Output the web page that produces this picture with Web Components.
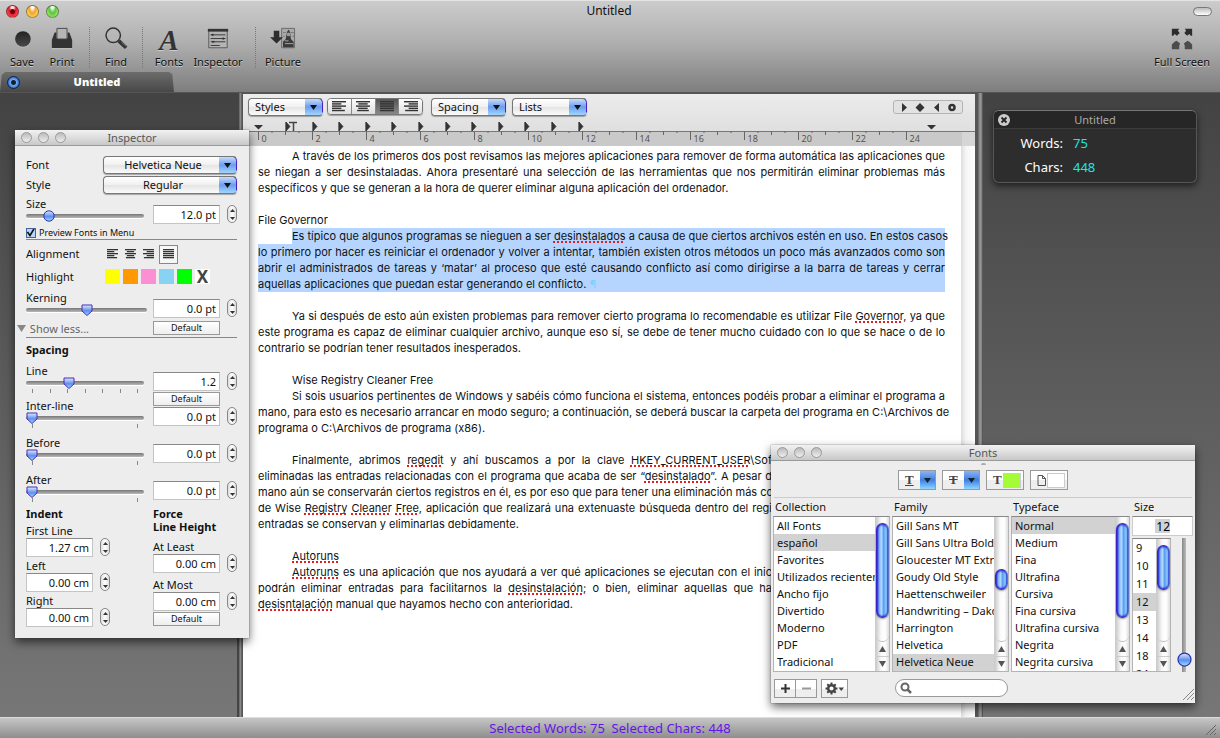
<!DOCTYPE html>
<html lang="en">
<head>
<meta charset="utf-8">
<title>Untitled</title>
<style>
html, body { height: 100%; margin: 0; }
body { font: 11px/14px "Noto Sans", sans-serif; color: #111; overflow: hidden; }
</style>
</head>
<body>
<writer-window></writer-window>

<script>
const define = (name, html, setup) => {
  const template = document.createElement('template');
  customElements.define(name, class extends HTMLElement {
    connectedCallback() {
      if (this.shadowRoot) return;
      const root = this.attachShadow({ mode: 'open' });
      template.innerHTML = typeof html === 'function' ? html(this) : html;
      root.append(template.content.cloneNode(true));
      if (setup) setup(this, root);
    }
  });
};
const svgUrl = s => `url('data:image/svg+xml,${encodeURIComponent(s)}')`;

const bars = (kind) => {
  const rows = { left: [[0,12],[0,8],[0,12],[0,8],[0,11]], center: [[0,12],[2,8],[0,12],[2,8],[1,10]],
    full: [[0,12],[0,12],[0,12],[0,12],[0,12]], right: [[0,12],[4,8],[0,12],[4,8],[1,11]] }[kind];
  return rows.map(([x, w], i) => `<rect x="${x}" y="${i * 2}" width="${w}" height="1.3"/>`).join('');
};
const alignIcon = (kind, w = 14, h = 11) => `<svg width="${w}" height="${h}" viewBox="0 0 12 10" preserveAspectRatio="none" fill="#333">${bars(kind)}</svg>`;

const icons = {
  save: '<defs><linearGradient id="g" x2="0" y2="1"><stop stop-color="#222"/><stop offset="1" stop-color="#4a4a4a"/></linearGradient></defs><circle cx="15" cy="14" r="8.500" fill="#ccc" opacity=".6"/><circle cx="15" cy="13" r="8.500" fill="url(#g)"/>',
  print: '<path d="M7 6h-1L3 14v8q0 1 1 1h20q1 0 1-1v-8L22 6h-2v6H8V6z" fill="#333"/><path d="M8.500 1.500h11V13h-11z" fill="#b5b5b5" stroke="#444"/><path d="M3 23.500h22" stroke="#ccc"/>',
  find: '<circle cx="11" cy="9" r="7.800" fill="#bbb" fill-opacity=".4" stroke="#333" stroke-width="1.600"/><path d="M17 15l8 7.500" stroke="#333" stroke-width="4"/><path d="M20 16.500l5 4.500" stroke="#777" stroke-width="1"/>',
  inspector: '<path d="M4 3.500h20v19H4z" fill="#b4b4b4" stroke="#555"/><path d="M3 2h22v3H3z" fill="#333"/><path d="M6 8.500h16M6 12.500h16M6 16h16M6 20h10" stroke="#333"/><path d="M9 7v3l-3-1.500zM19 11v3l3-1.500zM8 14.500v3l3-1.500z" fill="#333"/>',
  picture: '<path d="M12.500 1.500h14v21h-14z" fill="#aaa" stroke="#666"/><path d="M14 6h3M22 6h4M14 10h2M24 10h2" stroke="#777"/><path d="M17 13q1-9 3-10q2 1 2.500 10l3 3v6H14v-6z" fill="#3a3a3a"/><circle cx="20" cy="8" r="2" fill="#999"/><path d="M16 18h9M16 15h4" stroke="#aaa"/><path d="M4 4h6v7h4l-7 7-7-7h4z" fill="#2d2d2d"/>',
  full: '<g fill="#2c2c2c"><path d="M3 2h8L9.500 4 11.500 6.500 8.500 9.500 6 7.500 4.500 9.500H3z"/><path d="M25 2h-8l1.500 2L16.500 6.500 19.500 9.500 22 7.500l1.500 2H25z"/></g><g fill="#4c4c4c"><path d="M3 24h8v-4l1-2-4-3-2 1-3 3z"/><path d="M25 24h-8v-4l-1-2 4-3 2 1 3 3z"/></g>'
};

define('tool-button', el => `<style>
  :host { display: block; width: var(--tool-width, 40px); }
  button { all: unset; box-sizing: border-box; width: 100%; display: flex; flex-direction: column; align-items: center; gap: 4px; white-space: nowrap; text-shadow: 0 1px 0 #ccc; }
  svg { display: block; width: 26px; height: 24px; }
  .a { height: 24px; font: italic bold 29px/26px "Liberation Serif", serif; color: #333; }
</style><button type="button">${el.getAttribute('icon') === 'fonts' ? '<span class="a" aria-hidden="true">A</span>' : `<svg viewBox="0 0 28 26" aria-hidden="true">${icons[el.getAttribute('icon')]}</svg>`}<span><slot></slot></span></button>`);

define('traffic-lights', el => `<style>
  :host { display: flex; gap: var(--light-gap, 7px); align-items: center; }
  button { all: unset; box-sizing: border-box; width: var(--light, 13px); height: var(--light, 13px); border-radius: 50%; border: 1px solid rgba(60,20,10,.5); }
  .close { background: radial-gradient(circle at 50% 50%, #700 0 2px, transparent 3px), radial-gradient(ellipse at 50% 10%, #fdd 0 15%, #e01830 45%, #f66 100%); }
  .min { background: radial-gradient(ellipse at 50% 0%, #fff 0 15%, #f4a030 45%, #ff6 100%); }
  .zoom { background: radial-gradient(ellipse at 50% 0%, #efe 0 15%, #5cc43e 45%, #bf8 100%); }
  :host([muted]) button { background: linear-gradient(#bbb, #eee); border-color: #999; }
</style><button type="button" class="close" aria-label="Close"></button><button type="button" class="min" aria-label="Minimize"></button><button type="button" class="zoom" aria-label="Zoom"></button>`);

define('window-header', `<style>
  :host { display: block; background: linear-gradient(#ccc, #b0b0b0 45%, #7e7e7e); border-bottom: 1px solid #555; border-top: 1px solid #e4e4e4; box-sizing: border-box; height: 93px; }
  .title { display: grid; grid-template-columns: 1fr auto 1fr; align-items: center; height: 20px; padding: 0 8px 0 6px; font-size: 12px; }
  .pill { all: unset; justify-self: end; width: 17px; height: 7px; border: 1px solid #777; border-radius: 5px; background: linear-gradient(#bbb, #fff); }
  .tools { display: flex; height: 51px; padding: 6px 18px 0 2px; box-sizing: border-box; }
  .sep { width: 0; border-left: 1px dotted #777; margin: 0 7px; height: 41px; }
  .push { margin-left: auto; }
  .tab { display: flex; align-items: center; width: 174px; height: 20px; background: linear-gradient(#6c6c6c, #484848); clip-path: polygon(3% 0, 97% 0, 99% 10%, 100% 100%, 0 100%, 1% 15%); color: #fff; font-weight: 700; }
  .tab b { flex: 1; text-align: center; }
  .tab button { all: unset; width: 11px; height: 11px; margin-left: 7px; border-radius: 50%; border: 1px solid #124; background: radial-gradient(circle, #123 0 2px, #7ae 3px, #26c 6px); }
</style>
<div class="title"><traffic-lights></traffic-lights><span>Untitled</span><button class="pill" type="button" aria-label="Toggle toolbar"></button></div>
<div class="tools">
  <tool-button icon="save">Save</tool-button><tool-button icon="print">Print</tool-button><span class="sep"></span>
  <tool-button icon="find" style="--tool-width:38px">Find</tool-button><span class="sep"></span>
  <tool-button icon="fonts" style="--tool-width:38px">Fonts</tool-button><tool-button icon="inspector" style="--tool-width:60px">Inspector</tool-button><span class="sep"></span>
  <tool-button icon="picture">Picture</tool-button><tool-button class="push" icon="full">Full Screen</tool-button>
</div>
<div class="tab"><button type="button" aria-label="Close tab"></button><b>Untitled</b></div>`);

const popArrow = svgUrl('<svg xmlns="http://www.w3.org/2000/svg" width="18" height="18" viewBox="0 0 18 18" preserveAspectRatio="none"><defs><linearGradient id="g" x2="0" y2="1"><stop stop-color="#d4e2fb"/><stop offset=".5" stop-color="#6a9ef0"/><stop offset="1" stop-color="#a8dcff"/></linearGradient></defs><path d="M0 0h14q4 0 4 4v10q0 4-4 4H0z" fill="url(#g)"/><path d="M0 .5h14q3.500 0 3.500 4v10" fill="none" stroke="#4a20c0"/><path d="M5 7h7l-3.500 5z" fill="#111"/></svg>');
define('pull-down', el => `<style>
  :host { display: block; }
  select { appearance: none; box-sizing: border-box; display: block; width: 100%; height: 18px; margin: 0; padding: 0 18px 0 6px; font: inherit; color: inherit;
    border: 1px solid #777; border-right-color: transparent; border-radius: 4px; background: ${popArrow} right 0 top 0 / 18px 18px no-repeat border-box, linear-gradient(#fff, #f0f0f0 50%, #e4e4e4 51%, #fbfbfb); box-shadow: 0 1px 1px rgba(0,0,0,.3); }
  :host([centered]) select { text-align-last: center; padding-left: 4px; }
</style><select aria-label="${el.getAttribute('label')}"><option>${el.getAttribute('value')}</option></select>`);

define('ruler-strip', () => {
  let marks = '';
  for (let q = 0; q <= 48; q++) {
    const x = 15.5 + q * 13.5, cm = q / 2, major = q % 4 === 0;
    marks += `<path d="M${x} 12v${major ? 9 : q % 2 ? 2 : 4}" stroke="#666"/>`;
    if (major) marks += `<text x="${x + 3}" y="23">${cm}</text>`;
  }
  for (let i = 0; i < 12; i++) marks += `<path d="M${43 + Math.round(i * 26.6)} 3v9M${43 + Math.round(i * 26.6)} 3l4 4.500-4 4.500z" fill="#333" stroke="#333" stroke-width=".8"/>`;
  return `<style>
  :host { display: block; height: 27px; background: linear-gradient(transparent 12px, #777 12px 13px, #c9c9c9 13px); overflow: hidden; }
  svg { display: block; }
  text { font: 9px "Noto Sans", sans-serif; fill: #555; }
</style><svg width="732" height="27" aria-label="Ruler">${marks}
<path d="M719 13h14v15h-14z" fill="#d6d6d6"/>
<path d="M11 6h9l-4.500 4.500zM684 6h9l-4.500 4.500z" fill="#333"/><path d="M46 3.500h8M50.500 3v9" stroke="#444" stroke-width="1.500"/></svg>`;
});

define('format-bar', `<style>
  :host { display: block; background: linear-gradient(#ececec, #dadada); }
  .row { display: flex; align-items: center; height: 25px; padding: 0 12px 0 5px; gap: 8px; box-sizing: border-box; }
  pull-down { width: 75px; }
  .lists { margin-left: -2px; }
  .seg { display: flex; width: 94px; margin: 0 0 0 -4px; border: 1px solid #777; border-radius: 4px; overflow: hidden; box-shadow: 0 1px 1px rgba(0,0,0,.3); }
  .seg button { all: unset; flex: 1; height: 15px; display: grid; place-items: center; background: linear-gradient(#fdfdfd, #dedede); border-left: 1px solid #888; }
  .seg button:first-child { border: 0; }
  .seg .on { background: linear-gradient(#555, #888); }
  .tabs { all: unset; margin-left: auto; height: 12px; border: 1px solid #b4b4b4; border-radius: 3px; background: #e2e2e2; }
  svg { display: block; }
</style>
<div class="row"><pull-down label="Styles" value="Styles"></pull-down>
<div class="seg" role="group" aria-label="Alignment"><button type="button" aria-label="Left">${alignIcon('left')}</button><button type="button" aria-label="Center">${alignIcon('center')}</button><button type="button" class="on" aria-label="Justify">${alignIcon('full')}</button><button type="button" aria-label="Right">${alignIcon('right')}</button></div>
<pull-down label="Spacing" value="Spacing"></pull-down><pull-down class="lists" label="Lists" value="Lists"></pull-down>
<button type="button" class="tabs" aria-label="Tab stops"><svg width="68" height="13" fill="#333"><path d="M8 2l5 4.500-5 4.500zM26 2l4.500 4.500-4.500 4.500-4.500-4.500zM45 2v9l-5-4.500z"/><circle cx="58" cy="6.500" r="2.500" fill="none" stroke="#333" stroke-width="2.500"/></svg></button></div>
<ruler-strip></ruler-strip>`);

const L = (s, c = '') => `<span class="j ${c}">${s}</span>`;
define('document-page', `<style>
  :host { display: block; flex: 1; min-height: 0; overflow: hidden; background: linear-gradient(90deg, #fff 0 calc(100% - 14px), #ddd calc(100% - 14px), #f6f6f6 calc(100% - 9px), #fff); }
  article { padding: 2px 30px 0 15px; font: 11px/16px Inter, "Liberation Sans", sans-serif; color: #111; }
  p { margin: 0 0 16px; }
  p.tight { margin: 0; }
  span.j { display: block; white-space: nowrap; text-align-last: justify; }
  .j.in, .l.in { margin-left: 34px; }
  .j.under { margin-right: 173px; }
  .l { display: block; white-space: nowrap; }
  u { text-decoration: underline dotted #e02020 2px; text-underline-offset: 1px; text-decoration-skip-ink: none; }
  .sel .j, .sel .l { background: #b5d5ff; }
  i { font-style: normal; color: #7fd0ff; }
</style>
<article>
<p>${L('A través de los primeros dos post revisamos las mejores aplicaciones para remover de forma automática las aplicaciones que', 'in')}
${L('se niegan a ser desinstaladas. Ahora presentaré una selección de las herramientas que nos permitirán eliminar problemas más')}
<span class="l">específicos y que se generan a la hora de querer eliminar alguna aplicación del ordenador.</span></p>
<p class="tight">File Governor</p>
<p class="sel">${L('Es típico que algunos programas se nieguen a ser <u>desinstalados</u> a causa de que ciertos archivos estén en uso. En estos casos', 'in')}
${L('lo primero por hacer es reiniciar el ordenador y volver a intentar, también existen otros métodos un poco más avanzados como son')}
${L('abrir el administrados de tareas y ‘matar’ al proceso que esté causando conflicto así como dirigirse a la barra de tareas y cerrar')}
<span class="l">aquellas aplicaciones que puedan estar generando el conflicto. <i>¶</i></span></p>
<p>${L('Ya si después de esto aún existen problemas para remover cierto programa lo recomendable es utilizar File <u>Governor</u>, ya que', 'in')}
${L('este programa es capaz de eliminar cualquier archivo, aunque eso sí, se debe de tener mucho cuidado con lo que se hace o de lo')}
<span class="l">contrario se podrían tener resultados inesperados.</span></p>
<p class="tight"><span class="l in">Wise Registry Cleaner Free</span></p>
<p>${L('Si sois usuarios pertinentes de Windows y sabéis cómo funciona el sistema, entonces podéis probar a eliminar el programa a', 'in')}
${L('mano, para esto es necesario arrancar en modo seguro; a continuación, se deberá buscar la carpeta del programa en C:\\Archivos de')}
<span class="l">programa o C:\\Archivos de programa (x86).</span></p>
<p>${L('Finalmente, abrimos <u>regedit</u> y ahí buscamos a por la clave <u>HKEY_CURRENT_USER</u>\\Sof', 'in under')}
${L('eliminadas las entradas relacionadas con el programa que acaba de ser “<u>desinstalado</u>”. A pesar d', 'under')}
${L('mano aún se conservarán ciertos registros en él, es por eso que para tener una eliminación más co', 'under')}
${L('de Wise <u>Registry</u> <u>Cleaner</u> <u>Free</u>, aplicación que realizará una extenuaste búsqueda dentro del regi', 'under')}
<span class="l">entradas se conservan y eliminarlas debidamente.</span></p>
<p class="tight"><span class="l in"><u>Autoruns</u></span></p>
<p>${L('<u>Autoruns</u> es una aplicación que nos ayudará a ver qué aplicaciones se ejecutan con el inic', 'in under')}
${L('podrán eliminar entradas para facilitarnos la <u>desinstalación</u>; o bien, eliminar aquellas que ha', 'under')}
<span class="l"><u>desisntalación</u> manual que hayamos hecho con anterioridad.</span></p>
</article>`);

define('palette-window', el => `<style>
  :host { display: block; background: #ededed; box-shadow: 0 4px 9px rgba(0,0,0,.6), 0 0 1px #555; }
  header { display: grid; grid-template-columns: 1fr auto 1fr; align-items: center; height: 16px; padding: 0 6px; background: linear-gradient(#f2f2f2, #c8c8c8); border-bottom: 1px solid #999; box-sizing: border-box; color: #555; --light: 11px; --light-gap: 6px; }
</style><header><traffic-lights muted></traffic-lights><span>${el.getAttribute('heading')}</span></header><slot></slot>`);

define('stepper-field', el => `<style>
  :host { display: grid; grid-template-columns: 67px 10px; gap: 0 7px; }
  label { grid-column: 1 / -1; line-height: 15px; }
  input { box-sizing: border-box; width: 67px; height: 19px; margin: 0; padding: 0 3px 0 2px; font: inherit; text-align: right; color: #111; background: #fff; border: 1px solid #c4c4c4; border-top: 1px solid #888; border-radius: 0; outline: 0; }
  .step { box-sizing: border-box; height: 18px; border: 1px solid #888; border-radius: 5px; background: linear-gradient(90deg, #ddd, #fff, #ddd); display: grid; grid-template-rows: 1fr 1fr; }
  .step button { all: unset; display: grid; place-items: center; }
  svg { display: block; }
  .default { all: unset; box-sizing: border-box; width: 67px; height: 14px; margin-top: 1px; border: 1px solid #999; background: linear-gradient(#fff, #eee); font-size: 9px; line-height: 12px; text-align: center; }
</style>
${el.hasAttribute('label') ? `<label for="v">${el.getAttribute('label')}</label>` : ''}
<input id="v" type="text" value="${el.getAttribute('value')}" aria-label="${el.getAttribute('label') || el.getAttribute('name')}">
<span class="step"><button type="button" aria-label="Increase"><svg width="5" height="3"><path d="M0 3h5L2.500 0z" fill="#333"/></svg></button><button type="button" aria-label="Decrease"><svg width="5" height="3"><path d="M0 0h5L2.500 3z" fill="#333"/></svg></button></span>
${el.hasAttribute('resettable') ? '<button class="default" type="button">Default</button>' : ''}`);

const gradBlue = '<defs><linearGradient id="g" x2="0" y2="1"><stop stop-color="#e0ecff"/><stop offset=".55" stop-color="#5c8fee"/><stop offset="1" stop-color="#a6dcff"/></linearGradient></defs>';
const pentagon = svgUrl(`<svg xmlns="http://www.w3.org/2000/svg" width="12" height="12">${gradBlue}<path d="M1 1h10v6L6 11.500 1 7z" fill="url(#g)" stroke="#4a2bb8"/></svg>`);
const knob = size => svgUrl(`<svg xmlns="http://www.w3.org/2000/svg" width="${size}" height="${size}" viewBox="0 0 12 12">${gradBlue}<circle cx="6" cy="6" r="5.200" fill="url(#g)" stroke="#2a35a8"/></svg>`);

define('slider-field', el => {
  const ticks = +el.getAttribute('ticks') || 0;
  const w = +el.getAttribute('track') || 118;
  const t = Array.from({ length: ticks }, (_, i) => `<path d="M${6.5 + Math.round(i * (w - 13) / (ticks - 1))} 0v4" stroke="#888"/>`).join('');
  return `<style>
  :host { display: grid; grid-template-columns: 127px auto; height: 27px; }
  .left { display: grid; grid-template-rows: 13px 12px; align-content: start; justify-items: start; }
  label { line-height: 13px; }
  input { appearance: none; width: ${w}px; height: 12px; margin: 0; background: transparent; }
  input::-webkit-slider-runnable-track { height: 4px; border-radius: 2px; background: linear-gradient(#777, #b8b8b8); box-shadow: 0 1px 0 #fff; }
  input::-webkit-slider-thumb { appearance: none; width: 12px; height: 12px; margin-top: -4px; background: ${el.hasAttribute('round') ? knob(12) : pentagon} no-repeat; }
  stepper-field { margin-top: 8px; }
  svg { display: block; height: 4px; }
</style><div class="left"><label for="r">${el.getAttribute('label')}</label><input id="r" type="range" min="0" max="1000" value="${el.getAttribute('position')}">${ticks ? `<svg width="${w}" height="4">${t}</svg>` : ''}<slot></slot></div>
<stepper-field name="${el.getAttribute('label')} value" value="${el.getAttribute('value')}" ${el.hasAttribute('resettable') ? 'resettable' : ''}></stepper-field>`;
});

define('inspector-panel', `<style>
  :host { display: block; padding: 9px 12px 11px 11px; }
  .pop { display: grid; grid-template-columns: 77px 1fr; align-items: center; height: 20px; }
  .size { margin-top: 2px; }
  .check { display: flex; align-items: center; gap: 3px; height: 13px; font-size: 9px; margin-top: 2px; }
  .check input { appearance: none; width: 10px; height: 10px; margin: 0; border: 1px solid #4466a0; background: ${svgUrl('<svg xmlns="http://www.w3.org/2000/svg" width="10" height="10"><path d="M0 0h10v10H0z" fill="#b8d6fa"/><path d="M1.500 4l2.500 3.500L8.500 0" fill="none" stroke="#111" stroke-width="1.600"/></svg>')} no-repeat center; box-sizing: border-box; }
  hr { border: 0; border-top: 1px solid #888; margin: 0; height: 0; }
  .row { display: grid; grid-template-columns: 79px 1fr; align-items: center; }
  .align { height: 28px; }
  .hl { height: 17px; }
  .set { display: flex; gap: 3px; align-items: center; }
  .set button { all: unset; display: grid; place-items: center; width: 15px; height: 15px; }
  .align .set button { width: 13px; height: 17px; padding: 0 1px; }
  .align .set .on { border: 1px solid #888; background: #f6f6f6; width: 15px; }
  .hl .set .x { font-weight: 700; font-size: 17px; line-height: 15px; color: #444; background: #fff; }
  .kern { height: 46px; margin-top: 6px; }
  .less { all: unset; color: #666; height: 14px; line-height: 14px; margin: 6px 0 0 -9px; white-space: nowrap; }
  h2 { font: inherit; font-weight: 700; line-height: 13px; margin: 0; }
  .spacing { margin: 5px 0 8px; }
  .tight { height: 35px; }
  .last { height: 34px; }
  .gap { height: 37px; }
  .cols { display: grid; grid-template-columns: 127px auto; align-items: start; }
  .cols h2 { margin-bottom: 3px; }
  .cols .force { margin-bottom: 6px; }
  .one { display: grid; gap: 1px; }
  .two { display: grid; gap: 4px; }
</style>
<div class="pop"><span>Font</span><pull-down centered label="Font" value="Helvetica Neue"></pull-down></div>
<div class="pop"><span>Style</span><pull-down centered label="Style" value="Regular"></pull-down></div>
<slider-field class="size" label="Size" position="165" value="12.0 pt" round></slider-field>
<label class="check"><input type="checkbox" checked>Preview Fonts in Menu</label>
<hr>
<div class="row align"><span>Alignment</span><div class="set"><button type="button" aria-label="Left">${alignIcon('left', 11, 10)}</button><button type="button" aria-label="Center">${alignIcon('center', 11, 10)}</button><button type="button" aria-label="Right">${alignIcon('right', 11, 10)}</button><button type="button" class="on" aria-label="Justify">${alignIcon('full', 11, 10)}</button></div></div>
<div class="row hl"><span>Highlight</span><div class="set"><button type="button" aria-label="Yellow" style="background:#ff0"></button><button type="button" aria-label="Orange" style="background:#ff9900"></button><button type="button" aria-label="Pink" style="background:#fc8fd4"></button><button type="button" aria-label="Blue" style="background:#88d2f4"></button><button type="button" aria-label="Green" style="background:#0f0"></button><button type="button" class="x" aria-label="No highlight">X</button></div></div>
<slider-field class="kern" label="Kerning" position="500" track="121" value="0.0 pt" resettable><button type="button" class="less"><svg width="10" height="8"><path d="M0 0h9L4.500 7z" fill="#888"/></svg> Show less...</button></slider-field>
<hr>
<h2 class="spacing">Spacing</h2>
<slider-field class="tight" label="Line" position="345" ticks="7" value="1.2" resettable></slider-field>
<slider-field class="gap" label="Inter-line" position="0" ticks="2" value="0.0 pt"></slider-field>
<slider-field class="gap" label="Before" position="0" ticks="2" value="0.0 pt"></slider-field>
<slider-field class="last" label="After" position="0" ticks="2" value="0.0 pt"></slider-field>
<div class="cols"><div><h2>Indent</h2><div class="one"><stepper-field label="First Line" value="1.27 cm"></stepper-field><stepper-field label="Left" value="0.00 cm"></stepper-field><stepper-field label="Right" value="0.00 cm"></stepper-field></div></div>
<div><h2 class="force">Force<br>Line Height</h2><div class="two"><stepper-field label="At Least" value="0.00 cm"></stepper-field><stepper-field label="At Most" value="0.00 cm" resettable></stepper-field></div></div></div>`);

define('scroll-track', el => `<style>
  :host { display: flex; flex-direction: column; width: 14px; background: linear-gradient(90deg, #ccc, #fafafa 40%, #fff 70%, #ddd); border-left: 1px solid #ccc; box-sizing: border-box; }
  .lane { flex: 1; min-height: 0; display: flex; flex-direction: column; border-bottom-left-radius: 7px; border-bottom-right-radius: 7px; border-bottom: 1px solid #bbb; }
  .lane::before { content: ""; flex: ${el.getAttribute('before')} 0 0; }
  .lane::after { content: ""; flex: ${el.getAttribute('after')} 0 0; }
  .thumb { flex: ${el.getAttribute('thumb')} 0 0; box-sizing: border-box; border: 1px solid #3a22c4; border-right-color: #5a72c8; border-radius: 7px; background: linear-gradient(90deg, #3a3ce0, #79aef8 20%, #b6dafc 40%, #5c9cf4 60%, #8fd0ff 85%, #4a7ae0); box-shadow: inset 0 1px 2px #22c, inset 0 -1px 2px #22c, 0 1px 2px rgba(0,0,0,.4); }
  button { all: unset; height: 14px; display: grid; place-items: center; border-top: 1px solid #ccc; }
  button:first-of-type { border-top: 0; }
</style><div class="lane"><div class="thumb"></div></div><button type="button" aria-label="Scroll up"><svg width="7" height="6"><path d="M0 6h7L3.500 0z" fill="#555"/></svg></button><button type="button" aria-label="Scroll down"><svg width="7" height="6"><path d="M0 0h7L3.500 6z" fill="#555"/></svg></button>`);

define('font-list', el => {
  const items = el.getAttribute('items').split('|');
  return `<style>
  :host { display: flex; min-width: 0; box-sizing: border-box; background: #fff; border: 1px solid #b4b4b4; border-top-color: #888; overflow: hidden; }
  ul { flex: 1; min-width: 0; margin: 0; padding: 0; list-style: none; display: grid; grid-auto-rows: var(--row, 1fr); overflow: hidden; }
  li { padding-left: 3px; white-space: nowrap; overflow: hidden; display: flex; align-items: center; line-height: var(--line, 16px); }
  li[aria-selected=true] { background: #d2d2d2; }
</style><ul role="listbox" aria-label="${el.getAttribute('label')}">${items.map(i => `<li role="option" aria-selected="${i === el.getAttribute('selected')}">${i}</li>`).join('')}</ul><scroll-track ${['before', 'thumb', 'after'].map(k => `${k}="${el.getAttribute(k)}"`).join(' ')}></scroll-track>`;
});

define('fonts-panel', `<style>
  :host { display: block; padding: 0 2px 5px; }
  .bump { width: 5px; height: 2px; border-radius: 2px 2px 0 0; background: #aaa; margin: 2px auto 5px; }
  .tools { display: flex; justify-content: center; gap: 6px; padding-bottom: 7px; border-bottom: 1px solid #ccc; margin: 0 1px; }
  .tools button { all: unset; box-sizing: border-box; width: 38px; height: 20px; padding-left: 6px; border: 1px solid #999; display: flex; align-items: center; justify-content: space-between; background: linear-gradient(#fff 50%, #eee 50%); font: bold 13px/14px "Liberation Serif", serif; color: #444; overflow: hidden; }
  .tools .drop { align-self: stretch; width: 15px; display: grid; place-items: center; background: linear-gradient(#8bb4f4, #3f7fe0 50%, #8fd4ff); }
  .well { width: 16px; height: 13px; margin-right: 2px; border: 1px solid #ccc; }
  .grid { display: grid; grid-template-columns: 117fr 117fr 119fr 61px; gap: 0 2px; }
  .grid h3 { margin: 0; padding-left: 2px; font: inherit; line-height: 18px; }
  font-list { height: 156px; }
  .size { display: grid; grid-template-columns: 39px 1fr; grid-template-rows: 20px 134px; gap: 2px 6px; }
  .size input[type=text] { grid-column: 1 / -1; box-sizing: border-box; width: 100%; margin: 0; height: 20px; border: 1px solid #ccc; border-top-color: #888; border-radius: 0; padding: 0 22px 0 0; font: inherit; font-size: 12px; text-align: right; background: linear-gradient(#d2d2d2, #d2d2d2) right 22px center / 15px 14px no-repeat #fff; }
  .size font-list { height: 134px; --row: 18px; --line: 14px; }
  .size input[type=range] { appearance: none; writing-mode: vertical-lr; direction: rtl; width: 15px; height: 134px; margin: 0; background: linear-gradient(90deg, transparent 5px, #888 5px, #bbb 9px, transparent 9px); }
  .size input[type=range]::-webkit-slider-thumb { appearance: none; width: 15px; height: 15px; background: ${knob(15)} no-repeat; }
  footer { display: flex; align-items: center; height: 20px; margin-top: 6px; padding-left: 1px; }
  footer button { all: unset; box-sizing: border-box; width: 22px; height: 19px; border: 1px solid #999; display: grid; place-items: center; background: linear-gradient(#fff 50%, #eee 50%); }
  footer button + button { margin-left: -1px; }
  footer button.gear { width: 27px; margin-left: 4px; }
  .search { display: flex; align-items: center; box-sizing: border-box; width: 113px; height: 18px; margin-left: 47px; padding-left: 4px; border: 1px solid #999; border-radius: 9px; background: #fff; }
  .search input { all: unset; flex: 1; min-width: 0; font-size: 11px; }
  .grip { margin: 12px -1px 0 auto; }
  svg { display: block; }
</style>
<div class="bump"></div>
<div class="tools">
 <button type="button" aria-label="Underline"><u>T</u><span class="drop"><svg width="7" height="5"><path d="M0 0h7L3.500 5z" fill="#123"/></svg></span></button>
 <button type="button" aria-label="Strikethrough"><s>T</s><span class="drop"><svg width="7" height="5"><path d="M0 0h7L3.500 5z" fill="#123"/></svg></span></button>
 <button type="button" aria-label="Text color">T<span class="well" style="background:#a4fb38"></span></button>
 <button type="button" aria-label="Page color"><svg width="9" height="11"><path d="M1 .5h4.500l3 3v7H1zM5.500.5v3h3" fill="none" stroke="#555"/></svg><span class="well" style="background:#fff"></span></button>
</div>
<div class="grid"><h3>Collection</h3><h3>Family</h3><h3>Typeface</h3><h3>Size</h3>
 <font-list label="Collection" selected="español" items="All Fonts|español|Favorites|Utilizados recientemente|Ancho fijo|Divertido|Moderno|PDF|Tradicional" before="6" thumb="95" after="24"></font-list>
 <font-list label="Family" selected="Helvetica Neue" items="Gill Sans MT|Gill Sans Ultra Bold|Gloucester MT Extra|Goudy Old Style|Haettenschweiler|Handwriting – Dakota|Harrington|Helvetica|Helvetica Neue" before="53" thumb="20" after="52"></font-list>
 <font-list label="Typeface" selected="Normal" items="Normal|Medium|Fina|Ultrafina|Cursiva|Fina cursiva|Ultrafina cursiva|Negrita|Negrita cursiva" before="6" thumb="95" after="24"></font-list>
 <div class="size"><input type="text" aria-label="Font size" value="12"><font-list label="Sizes" selected="12" items="9|10|11|12|13|14|18|24" before="6" thumb="44" after="52"></font-list><input type="range" aria-label="Size" min="0" max="100" value="4"></div>
</div>
<footer><button type="button" aria-label="Add"><svg width="9" height="9"><path d="M0 4.500h9M4.500 0v9" stroke="#333" stroke-width="2"/></svg></button><button type="button" aria-label="Remove"><svg width="9" height="9"><path d="M0 4.500h9" stroke="#999" stroke-width="2"/></svg></button>
<button type="button" class="gear" aria-label="Actions"><svg width="19" height="13"><g transform="translate(6.500 6.500)"><circle r="3.300" fill="none" stroke="#444" stroke-width="2.400"/><path d="M0-6v2.500M0 6V3.500M-6 0h2.500M6 0H3.500M-4.200-4.200l1.700 1.700M4.200 4.200L2.500 2.500M-4.200 4.200l1.700-1.700M4.200-4.200L2.500-2.500" stroke="#444" stroke-width="2"/></g><path d="M13.500 5.500h5.500l-2.750 3.500z" fill="#444"/></svg></button>
<label class="search"><svg width="12" height="12"><circle cx="5" cy="5" r="3.500" fill="none" stroke="#666" stroke-width="2"/><path d="M7.500 7.500l3.500 3.500" stroke="#666" stroke-width="2.500"/></svg><input type="search" aria-label="Search fonts"></label>
<svg class="grip" width="12" height="12"><path d="M1 12L12 1M5 12l7-7M9 12l3-3" stroke="#888"/></svg></footer>`);

define('stats-hud', `<style>
  :host { display: block; background: #2d2d2d; border: 1px solid #565656; border-top-color: #777; border-radius: 6px; box-shadow: 0 3px 7px rgba(0,0,0,.6); overflow: hidden; box-sizing: border-box; }
  header { display: grid; grid-template-columns: 1fr auto 1fr; align-items: center; height: 17px; padding: 0 4px; background: #262626; border-bottom: 1px solid #3c3c3c; color: #aaa; }
  header button { all: unset; width: 12px; height: 12px; }
  svg { display: block; }
  dl { display: grid; grid-template-columns: 69px 1fr; gap: 0 10px; line-height: 24px; font-size: 13px; margin: 2px 0 3px; color: #fff; }
  dt { text-align: right; } dd { margin: 0; color: #1fe6e0; }
</style><header><button type="button" aria-label="Close"><svg width="12" height="12"><circle cx="6" cy="6" r="6" fill="#ccc"/><path d="M3.500 3.500l5 5M8.500 3.500l-5 5" stroke="#222" stroke-width="1.800"/></svg></button><span>Untitled</span></header>
<dl><dt>Words:</dt><dd>75</dd><dt>Chars:</dt><dd>448</dd></dl>`);

define('status-bar', `<style>
  :host { display: grid; grid-template-columns: 1fr auto 1fr; align-items: center; height: 21px; box-sizing: border-box; border-top: 1px solid #ddd; background: linear-gradient(#c6c6c6, #8e8e8e); color: #6414e8; font-size: 13px; line-height: 18px; }
  span { grid-column: 2; white-space: pre; }
  svg { justify-self: end; align-self: end; margin: 0 4px 3px; }
</style><span>Selected Words: 75  Selected Chars: 448</span><svg width="11" height="11"><path d="M1 11L11 1M5 11l6-6M9 11l2-2" stroke="#666"/></svg>`);

define('writer-window', `<style>
  :host { display: flex; flex-direction: column; height: 100vh; position: relative; background: #444; }
  main { flex: 1; min-height: 0; display: grid; grid-template-columns: minmax(0, 1fr) minmax(0, 746px) minmax(0, 1fr); background: linear-gradient(#434343, #777); }
  .doc { grid-column: 2; min-height: 0; display: flex; flex-direction: column; border: solid #565656; border-width: 1px 8px 0 6px; border-image: linear-gradient(90deg, #444 0 2px, #999 3px, #555 5px, #555 calc(100% - 5px), #888 calc(100% - 4px), #999 calc(100% - 2px), #444) 1 8 0 6; }
  .inspector, .fonts, stats-hud { position: absolute; }
  .inspector { left: 15px; top: 130px; width: 234px; }
  .fonts { right: 25px; top: 445px; width: 424px; }
  stats-hud { right: 23px; top: 110px; width: 204px; }
</style>
<window-header></window-header>
<main><div class="doc"><format-bar></format-bar><document-page></document-page></div></main>
<status-bar></status-bar>
<palette-window class="inspector" heading="Inspector"><inspector-panel></inspector-panel></palette-window>
<palette-window class="fonts" heading="Fonts"><fonts-panel></fonts-panel></palette-window>
<stats-hud></stats-hud>`);
</script>
</body>
</html>
